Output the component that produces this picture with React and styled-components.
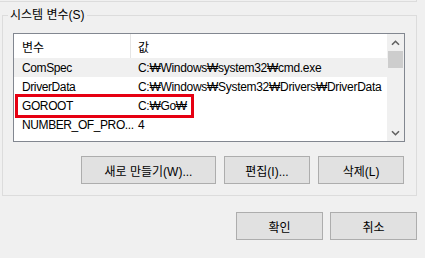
import React from "react";
import styled, { createGlobalStyle } from "styled-components";

const GlobalStyle = createGlobalStyle`
  html, body {
    margin: 0;
    padding: 0;
  }
  body {
    background: #f0f0f0;
    font-family: "Liberation Sans", "Noto Sans CJK KR", sans-serif;
    font-size: 12px;
    color: #000;
  }
`;

const variables = [
  { name: "ComSpec", value: "C:₩Windows₩system32₩cmd.exe", hover: true },
  { name: "DriverData", value: "C:₩Windows₩System32₩Drivers₩DriverData" },
  { name: "GOROOT", value: "C:₩Go₩", marked: true },
  { name: "NUMBER_OF_PRO...", value: "4" },
];

function Chevron({ down }) {
  return (
    <svg width="9" height="6" viewBox="0 0 9 6">
      <path
        d={down ? "M1 1.2 L4.5 4.7 L8 1.2" : "M1 4.8 L4.5 1.3 L8 4.8"}
        fill="none"
        stroke="#606060"
        strokeWidth="1.6"
      />
    </svg>
  );
}

function App() {
  return (
    <Window>
      <GlobalStyle />
      <PrevGroupEdge />
      <Group>
        <Legend>시스템 변수(S)</Legend>
        <List>
          <ListBody>
            <HeaderRow>
              <NameCell $divider>변수</NameCell>
              <ValueCell>값</ValueCell>
            </HeaderRow>
            {variables.map((v) => (
              <Row key={v.name} $hover={v.hover}>
                <NameCell $tight>{v.name}</NameCell>
                <ValueCell $tight>{v.value}</ValueCell>
                {v.marked && <Marker />}
              </Row>
            ))}
          </ListBody>
          <ScrollBar>
            <ArrowButton>
              <Chevron />
            </ArrowButton>
            <Thumb />
            <Track />
            <ArrowButton>
              <Chevron down />
            </ArrowButton>
          </ScrollBar>
        </List>
        <ButtonRow>
          <Button $w={135}>새로 만들기(W)...</Button>
          <Button $w={86}>편집(I)...</Button>
          <Button $w={86}>삭제(L)</Button>
        </ButtonRow>
      </Group>
      <DialogButtons>
        <Button $w={87}>확인</Button>
        <Button $w={87}>취소</Button>
      </DialogButtons>
    </Window>
  );
}

const Window = styled.div`
  width: 425px;
  height: 258px;
  overflow: hidden;
  background: #f0f0f0;
`;

const PrevGroupEdge = styled.div`
  width: 416px;
  height: 1px;
  border-bottom: 1px solid #dcdcdc;
  border-right: 1px solid #dcdcdc;
`;

const Group = styled.fieldset`
  box-sizing: border-box;
  width: 415px;
  margin: 5px 0 0 2px;
  padding: 10px 11px 11px 10px;
  border: 1px solid #dcdcdc;
  min-width: 0;
`;

const Legend = styled.legend`
  margin-left: -5px;
  padding: 0 2px;
  line-height: 16px;
  font-size: 12px;
`;

const List = styled.div`
  display: flex;
  box-sizing: border-box;
  height: 109px;
  border: 1px solid #828790;
  background: #fff;
`;

const ListBody = styled.div`
  flex: 1;
  min-width: 0;
  display: flex;
  flex-direction: column;
`;

const HeaderRow = styled.div`
  display: flex;
  height: 24px;
  align-items: stretch;
`;

const Row = styled.div`
  position: relative;
  display: flex;
  height: 19px;
  align-items: center;
  background: ${(p) => (p.$hover ? "#f0f0f0" : "transparent")};
`;

const NameCell = styled.div`
  box-sizing: border-box;
  width: 117px;
  flex: none;
  display: flex;
  align-items: center;
  padding-left: 8px;
  white-space: nowrap;
  letter-spacing: ${(p) => (p.$tight ? "-0.4px" : "0")};
  border-right: 1px solid ${(p) => (p.$divider ? "#e5e5e5" : "transparent")};
`;

const ValueCell = styled.div`
  flex: 1;
  display: flex;
  align-items: center;
  padding-left: 7px;
  white-space: nowrap;
  overflow: hidden;
  letter-spacing: ${(p) => (p.$tight ? "-0.3px" : "0")};
`;

const Marker = styled.div`
  position: absolute;
  top: -2px;
  left: 1px;
  width: 179px;
  height: 24px;
  box-sizing: border-box;
  border: 3px solid #e60012;
  pointer-events: none;
`;

const ScrollBar = styled.div`
  width: 17px;
  flex: none;
  display: flex;
  flex-direction: column;
  background: #f0f0f0;
`;

const ArrowButton = styled.div`
  height: 17px;
  display: flex;
  align-items: center;
  justify-content: center;
`;

const Thumb = styled.div`
  height: 17px;
  margin: 0 1px;
  background: #cdcdcd;
`;

const Track = styled.div`
  flex: 1;
`;

const ButtonRow = styled.div`
  display: flex;
  justify-content: flex-end;
  gap: 8px;
  margin: 14px 1px 0 0;
`;

const DialogButtons = styled.div`
  display: flex;
  justify-content: flex-end;
  gap: 7px;
  margin-top: 16px;
  padding-right: 8px;
`;

const Button = styled.div`
  box-sizing: border-box;
  width: ${(p) => p.$w}px;
  height: 28px;
  display: flex;
  align-items: center;
  justify-content: center;
  background: #e1e1e1;
  border: 1px solid #adadad;
  font-size: 12px;
  white-space: nowrap;
`;

export default App;
